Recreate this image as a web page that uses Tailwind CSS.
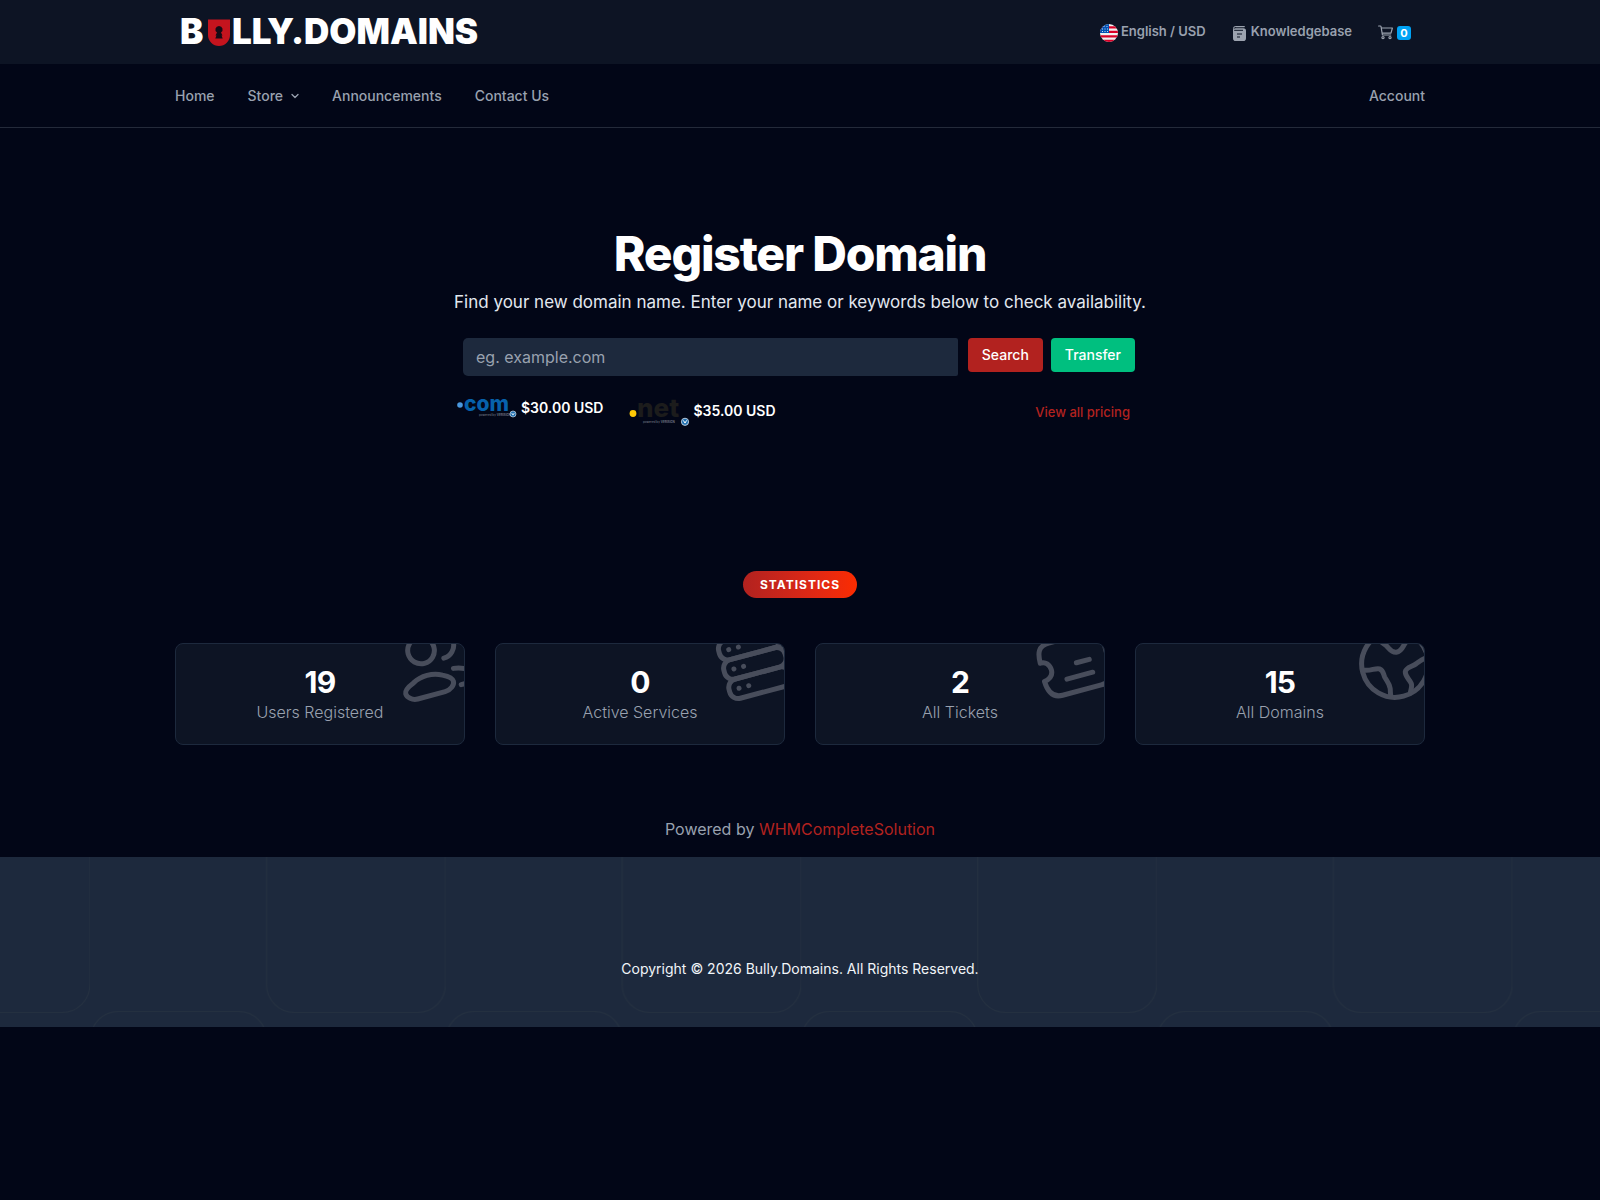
<!DOCTYPE html>
<html lang="en">
<head>
    <meta charset="UTF-8">
    <meta name="viewport" content="width=device-width, initial-scale=1">
    <title>Bully.Domains</title>
    <script src="https://cdn.jsdelivr.net/npm/@tailwindcss/browser@4"></script>
</head>
<body class="min-h-screen bg-[#020617] font-['Inter',sans-serif] text-gray-400">

    <!-- Top bar -->
    <div class="bg-[#0d1424]">
        <div class="mx-auto flex h-16 max-w-7xl items-center justify-between px-[15px]">
            <a href="#" class="ml-1" aria-label="Bully.Domains">
                <svg class="h-10 w-[310px]" viewBox="0 0 310 40" font-family="Inter, sans-serif" font-size="35" font-weight="900" fill="#fff">
                    <text x="1" y="32">B</text>
                    <path d="M29 7.500h22v15.500a10.500 10.500 0 0 1-22 0z" fill="#c4141e"/>
                    <path d="M40 14a3.600 3.600 0 0 0-2 6.600l-1.500 2.900h1l-1.200 3h7.400l-1.200-3h1l-1.500-2.900a3.600 3.600 0 0 0-2-6.600z" fill="#150b16"/>
                    <text x="53" y="32">LLY.DOMAINS</text>
                </svg>
            </a>
            <div class="flex items-center pr-3.5 text-[13px] font-semibold">
                <a href="#" class="flex items-center gap-[3px]">
                    <svg class="mt-0.5 size-[18px]" viewBox="0 0 18 18">
                        <clipPath id="flag"><circle cx="9" cy="9" r="9"/></clipPath>
                        <g clip-path="url(#flag)">
                            <path fill="#f0f0f0" d="M0 0h18v18H0z"/>
                            <path fill="#d80027" d="M0 2.200h18v2.300H0zM0 6.700h18v2.300H0zM0 11.200h18v2.200H0zM0 15.700h18V18H0z"/>
                            <path fill="#0052b4" d="M0 0h9v9H0z"/>
                            <path fill="#cfdcf0" d="M3.500 2h1v1h-1zM6.500 2h1v1h-1zM2 4.500h1v1H2zM4.500 4.500h1v1h-1zM7 4.500h1v1H7zM2 7h1v1H2zM4.500 7h1v1h-1zM7 7h1v1H7z"/>
                        </g>
                    </svg>
                    English / USD
                </a>
                <a href="#" class="ml-[27px] flex items-center gap-[5px]">
                    <svg class="mt-0.5 h-[15px] w-[13px]" viewBox="0 0 13 15" fill="none">
                        <path d="M3 0h8.300a.6.6 0 0 1 0 1.200H3A1.300 1.300 0 0 0 1.300 2.400L0 3A3 3 0 0 1 3 0z" fill="#9ca3af"/>
                        <path d="M0 3.300 2.500 2.200h8A2.500 2.500 0 0 1 13 4.700v7.500a2.800 2.800 0 0 1-2.800 2.800H2.800A2.800 2.800 0 0 1 0 12.200z" fill="#9ca3af"/>
                        <path d="M1.200 4.300H10M4 8h5M4 11h3" stroke="#0d1424" stroke-width="1"/>
                    </svg>
                    Knowledgebase
                </a>
                <a href="#" class="ml-[26px] flex items-center gap-1" aria-label="Cart">
                    <svg class="size-[15px]" viewBox="0 0 15 15" fill="none" stroke="#9ca3af" stroke-width="1.200" stroke-linecap="round" stroke-linejoin="round">
                        <path d="M.6 1h1.600c.5 0 .8.3.9.8l1.300 8.200h8.300M3.500 3h10.900l-1.400 5.200H4.200"/>
                        <circle cx="5" cy="12.600" r="1.100"/>
                        <circle cx="12" cy="12.600" r="1.100"/>
                    </svg>
                    <span class="mt-0.5 flex size-3.5 items-center justify-center rounded-[3px] bg-[#00a2f4] text-[11px] font-bold text-white">0</span>
                </a>
            </div>
        </div>
    </div>

    <!-- Main nav -->
    <nav class="border-b border-[#242a3a]">
        <div class="mx-auto flex max-w-7xl items-center justify-between px-[15px] pt-5 pb-[19px] text-sm leading-6 font-medium">
            <div class="flex items-center gap-[33px]">
                <a href="#">Home</a>
                <a href="#" class="flex items-center gap-2">Store
                    <svg class="h-2 w-2" viewBox="0 0 8 8" fill="none" stroke="currentColor" stroke-width="1.300" stroke-linecap="round" stroke-linejoin="round"><path d="M1 2.500 4 5.500 7 2.500"/></svg>
                </a>
                <a href="#">Announcements</a>
                <a href="#">Contact Us</a>
            </div>
            <a href="#">Account</a>
        </div>
    </nav>

    <main>
        <!-- Domain search -->
        <section class="px-4 pt-[102px] text-center">
            <h1 class="text-5xl leading-12 font-extrabold tracking-tight text-white">Register Domain</h1>
            <p class="mt-2.5 text-[17px] leading-7 text-slate-200">Find your new domain name. Enter your name or keywords below to check availability.</p>

            <div class="mx-auto mt-[22px] max-w-[690px]">
                <form class="flex items-start gap-2 px-2 pr-2.5">
                    <label for="domain" class="sr-only">Domain name</label>
                    <input id="domain" type="text" placeholder="eg. example.com" class="mr-0.5 h-[38px] min-w-0 flex-1 rounded-l-[5px] rounded-r-[2px] bg-slate-800 px-[13px] text-base text-white placeholder:text-gray-400">
                    <button type="submit" class="h-[34px] rounded bg-[#b2221f] px-3.5 text-sm font-medium text-white">Search</button>
                    <button type="button" class="h-[34px] rounded bg-[#00bf7f] px-3.5 text-sm font-medium text-white">Transfer</button>
                </form>

                <div class="mt-5 flex items-center justify-between pr-[15px] pl-0.5">
                    <div class="flex items-start gap-[26px] text-sm leading-6 font-semibold text-white">
                        <div class="flex items-center gap-1">
                            <svg class="h-6 w-[60px] overflow-visible" viewBox="0 0 60 24" font-family="Inter, sans-serif">
                                <circle cx="3" cy="9" r="2.800" fill="#4a98df"/>
                                <text x="7" y="15" font-size="21" font-weight="800" fill="#0762ac">com</text>
                                <text x="22" y="20" font-size="3" font-weight="500" fill="#6b7280">powered by <tspan font-weight="700">VERISIGN</tspan></text>
                                <circle cx="56" cy="18" r="3" fill="#1f6fb0" stroke="#c9d8e6" stroke-width=".7"/>
                                <path d="m54.600 16.900 1.400 2.200 1.400-2.200" fill="none" stroke="#fff" stroke-width=".8"/>
                            </svg>
                            <span>$30.00 USD</span>
                        </div>
                        <div class="flex items-center gap-1">
                            <svg class="h-[30px] w-[60px] overflow-visible" viewBox="0 0 60 30" font-family="Inter, sans-serif">
                                <circle cx="4" cy="17.500" r="3.400" fill="#ffc906"/>
                                <text x="8" y="20.500" font-size="26" font-weight="800" fill="#1c1c1c">net</text>
                                <text x="14" y="27" font-size="3" font-weight="500" fill="#6b7280">powered by <tspan font-weight="700">VERISIGN</tspan></text>
                                <circle cx="56" cy="25.800" r="3.600" fill="#1f6fb0" stroke="#c9d8e6" stroke-width=".9"/>
                                <path d="m54.400 24.400 1.600 2.700 1.600-2.700" fill="none" stroke="#fff" stroke-width="1"/>
                            </svg>
                            <span>$35.00 USD</span>
                        </div>
                    </div>
                    <a href="#" class="mt-1 text-[13px] font-medium text-[#b2221f]">View all pricing</a>
                </div>
            </div>
        </section>

        <!-- Statistics -->
        <section class="mx-auto mt-[145px] max-w-7xl px-[15px] text-center">
            <span class="inline-block rounded-full bg-linear-to-r from-[#b2221f] to-[#fb2c00] px-[17px] text-xs leading-[27px] font-bold tracking-[1px] text-white uppercase">Statistics</span>

            <div class="mt-[45px] grid grid-cols-4 gap-[30px] text-base font-light">
                <div class="relative overflow-hidden rounded-lg border border-slate-800 bg-[#0d1424] px-4 py-5">
                    <svg class="absolute -top-5 -right-[11px] size-20 -rotate-15" viewBox="0 0 24 24" fill="none" stroke="#484d5b" stroke-width="1.500" stroke-linecap="round" stroke-linejoin="round">
                        <circle cx="9" cy="7" r="4"/>
                        <path d="M15 11c2.200 0 4-1.800 4-4s-1.800-4-4-4"/>
                        <path d="M4.300 15.800c2.700-1.500 6.300-1.500 9 0 1 .5 2.700 1.400 2.700 2.600s-1.500 2.400-3.200 2.400H4.300c-1.700 0-3.100-1.300-3.100-2.500s2.100-2.100 3.100-2.500z"/>
                        <path d="M17 14.700c3 .3 5 1.800 5 3.500 0 1.100-1 1.800-2.500 1.800H18"/>
                    </svg>
                    <div class="text-3xl leading-9 font-bold tracking-tight text-white">19</div>
                    <div>Users Registered</div>
                </div>
                <div class="relative overflow-hidden rounded-lg border border-slate-800 bg-[#0d1424] px-4 py-5">
                    <svg class="absolute -top-5 -right-[11px] size-20 -rotate-15" viewBox="0 0 24 24" fill="none" stroke="#484d5b" stroke-width="1.500" stroke-linecap="round" stroke-linejoin="round">
                        <rect x="2.500" y="2.800" width="19" height="6" rx="2.600"/>
                        <rect x="2.500" y="8.800" width="19" height="6" rx="2.600"/>
                        <rect x="2.500" y="14.800" width="19" height="6" rx="2.600"/>
                        <path d="M5.500 5.800h.01M8.500 5.800h.01M5.500 11.800h.01M8.500 11.800h.01M5.500 17.800h.01M8.500 17.800h.01"/>
                    </svg>
                    <div class="text-3xl leading-9 font-bold tracking-tight text-white">0</div>
                    <div>Active Services</div>
                </div>
                <div class="relative overflow-hidden rounded-lg border border-slate-800 bg-[#0d1424] px-4 py-5">
                    <svg class="absolute -top-5 -right-[11px] size-20 -rotate-15" viewBox="0 0 24 24" fill="none" stroke="#484d5b" stroke-width="1.500" stroke-linecap="round" stroke-linejoin="round">
                        <path d="M2 9.100c1.600-.2 2.700 1.100 2.700 2.800S3.500 14.400 1.800 14.700c.1 3.200 1.200 5.400 4.200 5.400h12c3 0 4-2.200 4-5.200V9c0-3.200-1-5.100-4-5.100H6C2.700 3.900 2 6 2 9.100z"/>
                        <path d="M12.500 11.750h4M8.500 15.750h8"/>
                    </svg>
                    <div class="text-3xl leading-9 font-bold tracking-tight text-white">2</div>
                    <div>All Tickets</div>
                </div>
                <div class="relative overflow-hidden rounded-lg border border-slate-800 bg-[#0d1424] px-4 py-5">
                    <svg class="absolute -top-5 -right-[11px] size-20 -rotate-15" viewBox="0 0 24 24" fill="none" stroke="#484d5b" stroke-width="1.500" stroke-linecap="round" stroke-linejoin="round">
                        <circle cx="12" cy="12" r="10"/>
                        <path d="M2.200 11.200c1.800 1.100 3.800.3 4.900 1 1.100.8.700 1.700.9 2.800.3 1.300.9 2.100.7 3.700-.1.900-.4 1.400-.4 2.300"/>
                        <path d="M9 2.600c.2 2 1.300 2.400 1.900 3.400.7 1.100.9 2.500 2.400 2.700 1.900.2 2.400-1.500 3.600-2.200.9-.5 1.300-1 1.500-1.700"/>
                        <path d="M21.900 12.700c-.9-.3-2.200.3-3.800.9-1.400.5-3.200.2-3.700 1.400-.5 1.400.6 2.500.8 3.900.1 1-.6 1.700-1 2.700"/>
                    </svg>
                    <div class="text-3xl leading-9 font-bold tracking-tight text-white">15</div>
                    <div>All Domains</div>
                </div>
            </div>
        </section>

        <p class="mt-[72px] text-center text-base">Powered by <a href="#" class="text-[#b2221f]">WHMCompleteSolution</a></p>
    </main>

    <footer class="relative mt-4 bg-slate-800 px-4 pt-[100px] pb-[46px] text-center text-sm leading-6 text-slate-100">
        <!-- Staggered rounded tiles -->
        <svg class="absolute inset-0 h-full w-full" aria-hidden="true">
            <pattern id="tiles" width="355.600" height="320" patternUnits="userSpaceOnUse" x="90">
                <g fill="none" stroke="#243040" stroke-width="1">
                    <rect x="176.500" y="-60" width="179" height="215.500" rx="28"/>
                    <rect x=".5" y="154.500" width="176" height="215" rx="28"/>
                </g>
            </pattern>
            <rect width="100%" height="100%" fill="url(#tiles)"/>
        </svg>
        <p class="relative">Copyright © 2026 Bully.Domains. All Rights Reserved.</p>
    </footer>

</body>
</html>
